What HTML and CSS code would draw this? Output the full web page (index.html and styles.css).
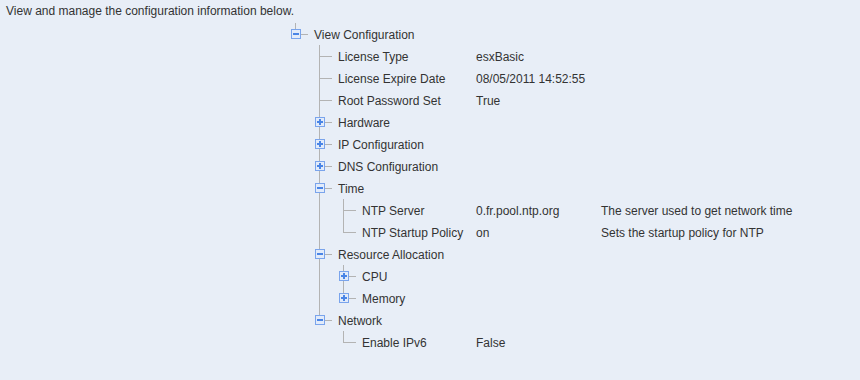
FILE: index.html
```html
<!DOCTYPE html>
<html lang="en">

<head>
  <meta charset="UTF-8">
  <title>View Configuration</title>
  <link rel="stylesheet" href="styles.css">
</head>

<body>
  <p class="intro">View and manage the configuration information below.</p>

  <ul class="tree">
    <li>
      <div class="row"><span class="toggle minus"></span><span class="label">View Configuration</span></div>
      <ul>
        <li><div class="row"><span class="label">License Type</span><span class="value">esxBasic</span></div></li>
        <li><div class="row"><span class="label">License Expire Date</span><span class="value">08/05/2011 14:52:55</span></div></li>
        <li><div class="row"><span class="label">Root Password Set</span><span class="value">True</span></div></li>
        <li><div class="row"><span class="toggle plus"></span><span class="label">Hardware</span></div></li>
        <li><div class="row"><span class="toggle plus"></span><span class="label">IP Configuration</span></div></li>
        <li><div class="row"><span class="toggle plus"></span><span class="label">DNS Configuration</span></div></li>
        <li>
          <div class="row"><span class="toggle minus"></span><span class="label">Time</span></div>
          <ul>
            <li><div class="row"><span class="label">NTP Server</span><span class="value">0.fr.pool.ntp.org</span><span class="desc">The server used to get network time</span></div></li>
            <li><div class="row"><span class="label">NTP Startup Policy</span><span class="value">on</span><span class="desc">Sets the startup policy for NTP</span></div></li>
          </ul>
        </li>
        <li>
          <div class="row"><span class="toggle minus"></span><span class="label">Resource Allocation</span></div>
          <ul>
            <li><div class="row"><span class="toggle plus"></span><span class="label">CPU</span></div></li>
            <li><div class="row"><span class="toggle plus"></span><span class="label">Memory</span></div></li>
          </ul>
        </li>
        <li>
          <div class="row"><span class="toggle minus"></span><span class="label">Network</span></div>
          <ul>
            <li><div class="row"><span class="label">Enable IPv6</span><span class="value">False</span></div></li>
          </ul>
        </li>
      </ul>
    </li>
  </ul>
</body>

</html>
```

FILE: styles.css
```css
* {
  margin: 0px;
  padding: 0px;
  box-sizing: border-box;
}

body {
  background-color: #e8eef7;
  font-family: "Liberation Sans", Arial, sans-serif;
  font-size: 12px;
  color: #333333;
}

.intro {
  height: 23px;
  padding: 1px 6px 0px 6px;
  line-height: 20px;
}

.tree,
.tree ul {
  list-style: none;
}

.tree {
  margin-left: 290px;
}

.tree ul {
  margin-left: 24px;
}

.tree li {
  position: relative;
}

/* vertical connector */
.tree li::before {
  content: "";
  position: absolute;
  left: 5px;
  top: 0px;
  bottom: 0px;
  width: 1px;
  background-color: #b3b3b3;
}

.tree li:last-child::before {
  bottom: auto;
  height: 12px;
}

.row {
  position: relative;
  display: flex;
  height: 22px;
  line-height: 25px;
  padding-left: 24px;
  white-space: nowrap;
}

/* horizontal connector */
.row::before {
  content: "";
  position: absolute;
  left: 6px;
  top: 11px;
  width: 12px;
  height: 1px;
  background-color: #b3b3b3;
}

.toggle {
  position: absolute;
  left: 1px;
  top: 6px;
  width: 10px;
  height: 10px;
  border: 1px solid #7aa4ec;
  background-color: #e2ebfa;
  z-index: 1;
}

.toggle::before {
  content: "";
  position: absolute;
  left: 1px;
  top: 3px;
  width: 6px;
  height: 2px;
  background-color: #4a85e6;
}

.plus::after {
  content: "";
  position: absolute;
  left: 3px;
  top: 1px;
  width: 2px;
  height: 6px;
  background-color: #4a85e6;
}

.tree ul .label {
  width: 138px;
}

.tree ul ul .label {
  width: 114px;
}

.value {
  width: 125px;
}
```
